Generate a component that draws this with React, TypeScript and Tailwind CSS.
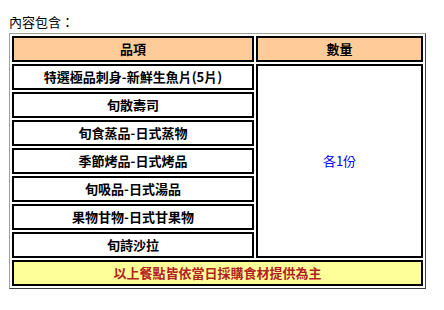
const items = [
  '特選極品刺身-新鮮生魚片(5片)',
  '旬散壽司',
  '旬食蒸品-日式蒸物',
  '季節烤品-日式烤品',
  '旬吸品-日式湯品',
  '果物甘物-日式甘果物',
  '旬詩沙拉',
];

const font = { fontFamily: '"Noto Sans CJK TC", "Noto Sans CJK SC", sans-serif' };

export default function App() {
  return (
    <div className="w-[444px] h-[310px] bg-white pl-[9px] pt-[14px]" style={font}>
      <div className="text-[13px] leading-[16px] text-black">內容包含：</div>
      <table className="mt-[3px] w-[417px] border-separate border-spacing-[2px] border border-t-[#a0a0a0] border-l-[#a0a0a0] border-r-[#404040] border-b-[#404040] text-[13px] font-bold">
        <tbody>
          <tr className="h-[26px] bg-[#ffcc99]">
            <td className="w-[242px] border-2 border-black text-center p-0 leading-[22px]">品項</td>
            <td className="border-2 border-black text-center p-0 leading-[22px]">數量</td>
          </tr>
          {items.map((it, i) => (
            <tr key={i} className="h-[26px]">
              <td className="border-2 border-black text-center p-0 leading-[22px] text-black">{it}</td>
              {i === 0 && (
                <td rowSpan={7} className="border-2 border-black text-center align-middle p-0 font-normal text-[#0000ff]">
                  各1份
                </td>
              )}
            </tr>
          ))}
          <tr className="h-[26px] bg-[#ffff99]">
            <td colSpan={2} className="border-2 border-black text-center p-0 leading-[22px] text-[#b22222]">
              以上餐點皆依當日採購食材提供為主
            </td>
          </tr>
        </tbody>
      </table>
    </div>
  );
}
